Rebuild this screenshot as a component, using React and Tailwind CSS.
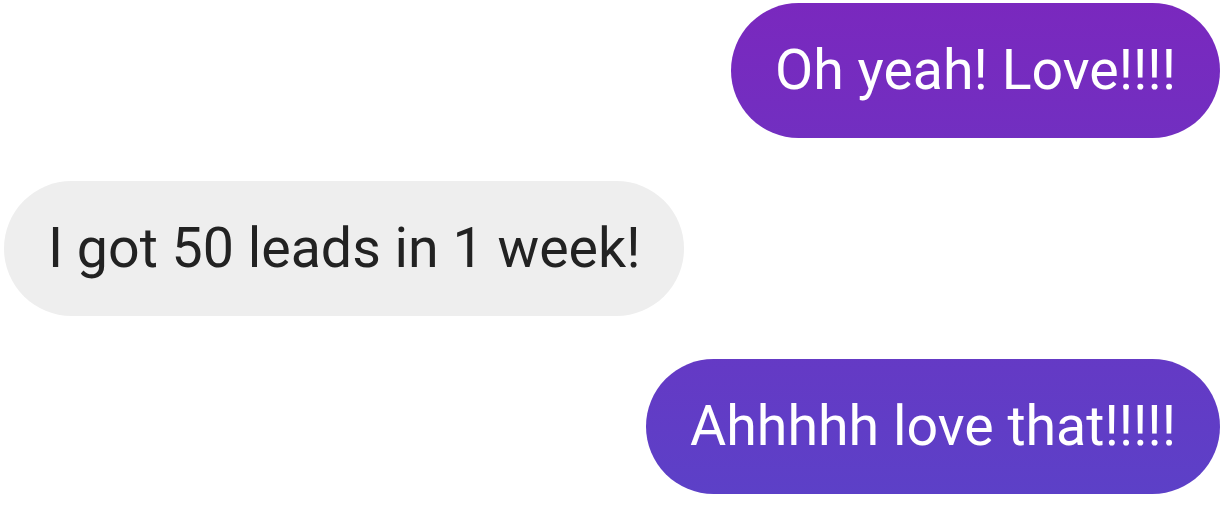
import React from 'react';

export default function App() {
  const messages = [
    { text: 'Oh yeah! Love!!!!', mine: true },
    { text: 'I got 50 leads in 1 week!', mine: false },
    { text: 'Ahhhhh love that!!!!!', mine: true },
  ];

  return (
    <div
      className="w-[1232px] h-[531px] bg-white flex flex-col gap-[43px] pt-[3px] pl-[4px] pr-[12px]"
      style={{ fontFamily: 'Roboto, "Noto Sans", sans-serif' }}
    >
      {messages.map((m, idx) => (
        <div key={idx} className={`flex ${m.mine ? 'justify-end' : 'justify-start'}`}>
          <div
            className={
              m.mine
                ? 'h-[135px] rounded-full px-[44px] flex items-center text-[55.5px] leading-none text-white bg-[linear-gradient(to_bottom,#7a28be,#5a42c8)] bg-fixed'
                : 'h-[135px] rounded-full px-[44px] flex items-center text-[55.5px] leading-none text-[#222222] bg-[#eeeeee]'
            }
          >
            {m.text}
          </div>
        </div>
      ))}
    </div>
  );
}
